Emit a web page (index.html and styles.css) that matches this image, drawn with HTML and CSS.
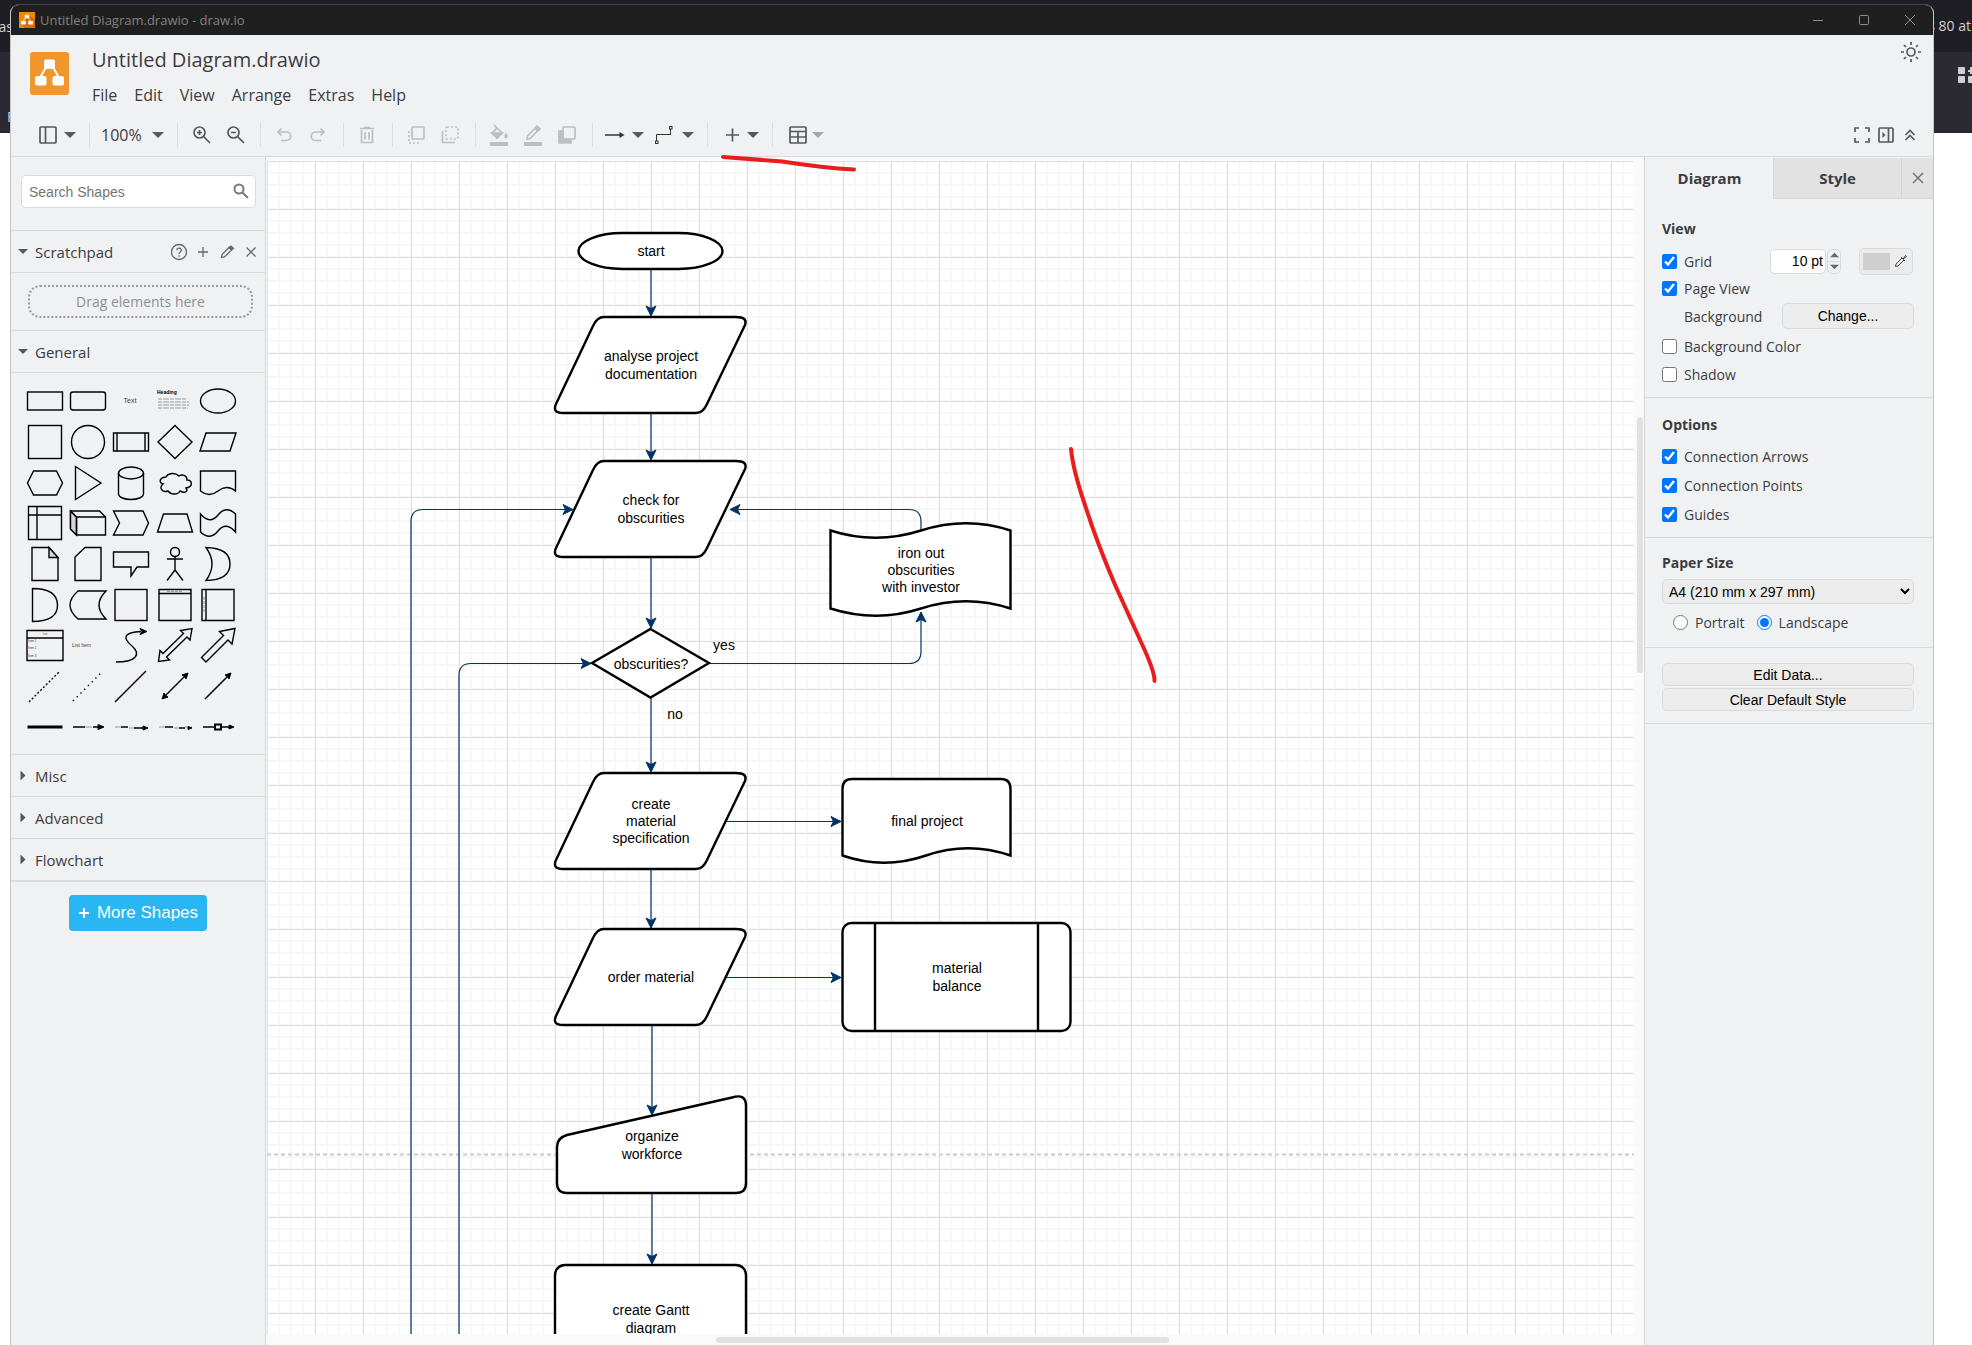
FILE: index.html
```html
<!DOCTYPE html>
<html lang="en">
<head>
<meta charset="utf-8">
<title>Untitled Diagram.drawio - draw.io</title>
<link rel="stylesheet" href="styles.css">
</head>
<body>
<svg class="defs" aria-hidden="true">
  <symbol id="caret" viewBox="0 0 12 8"><path d="M0 1h12L6 7z" fill="currentColor"/></symbol>
  <symbol id="logo" viewBox="0 0 39 43">
    <path d="M16 15 10 26M23 15 29 26" stroke="#fff" stroke-width="2"/>
    <rect x="14" y="7.500" width="11" height="9.500" rx="2" fill="#fff"/>
    <rect x="5" y="24" width="11.500" height="9.500" rx="2" fill="#fff"/>
    <rect x="22.500" y="24" width="11.500" height="9.500" rx="2" fill="#fff"/>
  </symbol>
</svg>

<div class="backdrop" aria-hidden="true">
  <span class="back-left">Pas</span>
  <span class="back-right">s 80 at</span>
  <svg class="back-icon" viewBox="0 0 14 18"><g fill="#d0d0d2"><rect x="0" y="1" width="7" height="7" rx="1"/><rect x="0" y="10" width="7" height="7" rx="1"/><rect x="10" y="10" width="7" height="7" rx="1"/><path d="M10 4h4v2h-4zM12 1h2v7h-2z"/></g></svg>
  <span class="back-tab">F</span>
</div>

<div class="window">
  <div class="titlebar">
    <svg class="titlebar-logo" viewBox="0 0 39 43" preserveAspectRatio="none"><path d="M0 0h39v43H0z" fill="#f08705"/><path d="M25 8 39 20V43H14L6 34z" fill="#df6c0c"/><use href="#logo"/></svg>
    <span>Untitled Diagram.drawio - draw.io</span>
    <div class="window-buttons">
      <button aria-label="Minimize"><svg viewBox="0 0 12 12"><path d="M1 6.500h10"/></svg></button>
      <button aria-label="Maximize"><svg viewBox="0 0 12 12"><rect x="1.500" y="1.500" width="9" height="9" rx="1"/></svg></button>
      <button aria-label="Close window"><svg viewBox="0 0 12 12"><path d="M1 1l10 10M11 1 1 11"/></svg></button>
    </div>
  </div>

  <header class="header">
    <div class="brand">
      <svg class="logo" viewBox="0 0 39 43"><rect width="39" height="43" rx="3" fill="#f0962d"/><use href="#logo"/></svg>
      <div class="brand-text">
        <h1>Untitled Diagram.drawio</h1>
        <nav class="menu">
          <a href="#file">File</a><a href="#edit">Edit</a><a href="#view">View</a><a href="#arrange">Arrange</a><a href="#extras">Extras</a><a href="#help">Help</a>
        </nav>
      </div>
      <button class="theme" aria-label="Appearance"><svg class="icon" viewBox="0 0 24 24"><circle cx="12" cy="12" r="4"/><path d="M12 2v3M12 19v3M2 12h3M19 12h3M5 5l2 2M17 17l2 2M5 19l2-2M17 7l2-2"/></svg></button>
    </div>
    <div class="toolbar">
      <div class="group"><button class="split" aria-label="View panels"><svg class="icon" viewBox="0 0 24 24"><rect x="4" y="4" width="16" height="16" rx="1"/><path d="M9.500 4v16"/></svg><svg class="caret"><use href="#caret"/></svg></button></div>
      <div class="group"><button class="split zoom">100%<svg class="caret"><use href="#caret"/></svg></button></div>
      <div class="group">
        <button aria-label="Zoom in"><svg class="icon" viewBox="0 0 24 24"><circle cx="10.500" cy="9.500" r="5.500"/><path d="M14.500 13.500 21 20M8 9.500h5M10.500 7v5"/></svg></button>
        <button aria-label="Zoom out"><svg class="icon" viewBox="0 0 24 24"><circle cx="10.500" cy="9.500" r="5.500"/><path d="M14.500 13.500 21 20M8 9.500h5"/></svg></button>
      </div>
      <div class="group off">
        <button aria-label="Undo" disabled><svg class="icon" viewBox="0 0 24 24"><path d="M9.500 5.500 6 9l3.500 3.500M6 9h8.500a4 4 0 0 1 0 8.500H9"/></svg></button>
        <button aria-label="Redo" disabled><svg class="icon" viewBox="0 0 24 24"><path d="M14.500 5.500 18 9l-3.500 3.500M18 9H9.500a4 4 0 0 0 0 8.500H15"/></svg></button>
      </div>
      <div class="group off"><button aria-label="Delete" disabled><svg class="icon" viewBox="0 0 24 24"><path d="M6.500 7v12.500h11V7M5 5.500h14M9 4.500h6M10 9v7.500M14 9v7.500"/></svg></button></div>
      <div class="group off">
        <button aria-label="To front" disabled><svg class="icon" viewBox="0 0 24 24"><rect x="8" y="4" width="12" height="12" rx="1"/><path d="M5 8v12h12" stroke-dasharray="2 2"/></svg></button>
        <button aria-label="To back" disabled><svg class="icon" viewBox="0 0 24 24"><rect x="8" y="4" width="12" height="12" rx="1" stroke-dasharray="2 2"/><path d="M4.500 8v11.500H17"/></svg></button>
      </div>
      <div class="group off">
        <button aria-label="Fill color" disabled><svg class="icon" viewBox="0 0 24 24"><path d="M7 2l8 8-5 5-5-5 5-5"/><path d="M5 10h10l-5 5z" fill="currentColor"/><path d="M19 11c3 4.500-3 4.500 0 0z" fill="currentColor"/><path d="M3 21h18" stroke-width="4"/></svg></button>
        <button aria-label="Line color" disabled><svg class="icon" viewBox="0 0 24 24"><path d="M6 16l.5-3L15 4.500 17.500 7 9 15.500z"/><path d="M14 5.500 16 3l3 3-2.500 2z" fill="currentColor"/><path d="M3 21h18" stroke-width="4"/></svg></button>
        <button aria-label="Shadow" disabled><svg class="icon" viewBox="0 0 24 24"><path d="M4 8h4v8.500h8V20H4z" fill="currentColor"/><rect x="8" y="4" width="12" height="12" rx="1"/></svg></button>
      </div>
      <div class="group">
        <button class="split" aria-label="Connection"><svg class="icon" viewBox="0 0 24 24"><path d="M1 12h16" stroke="#333" stroke-width="1.500"/><path d="M15.500 9l5 3-5 3z" fill="#333" stroke="none"/></svg><svg class="caret"><use href="#caret"/></svg></button>
        <button class="split" aria-label="Waypoints"><svg class="icon thin" viewBox="0 0 24 24"><path d="M2.500 18v-6.500h14V6"/><rect x="1.500" y="18" width="2.500" height="2.500"/><rect x="15.500" y="3.500" width="2.500" height="2.500"/></svg><svg class="caret"><use href="#caret"/></svg></button>
      </div>
      <div class="group"><button class="split" aria-label="Insert"><svg class="icon" viewBox="0 0 24 24"><path d="M7 12h13M13.500 5.500v13"/></svg><svg class="caret"><use href="#caret"/></svg></button></div>
      <div class="group"><button class="split pale" aria-label="Table"><svg class="icon" viewBox="0 0 24 24"><rect x="6" y="4" width="16" height="16" rx="1"/><path d="M6 8.500h16M6 14h16M14 8.500V20"/></svg><svg class="caret"><use href="#caret"/></svg></button></div>
      <div class="toolbar-end">
        <button aria-label="Fullscreen"><svg class="icon" viewBox="0 0 24 24"><path d="M5 9V5h4M15 5h4v4M19 15v4h-4M9 19H5v-4"/></svg></button>
        <button aria-label="Format panel"><svg class="icon" viewBox="0 0 24 24"><rect x="5" y="5" width="14" height="14" rx="1"/><path d="M14.500 5v14"/><path d="M8.500 9v6l3-3z" fill="currentColor" stroke="none"/></svg></button>
        <button aria-label="Collapse toolbar"><svg class="icon" viewBox="0 0 24 24"><path d="M7.500 12 12 7.500l4.500 4.500M7.500 17l4.500-4.500 4.500 4.500"/></svg></button>
      </div>
    </div>
  </header>

  <div class="workspace">
    <aside class="sidebar">
      <div class="search">
        <input type="text" placeholder="Search Shapes" aria-label="Search Shapes">
        <svg viewBox="0 0 16 16"><circle cx="6" cy="6" r="4.500"/><path d="M9.500 9.500 15 15"/></svg>
      </div>
      <div class="palette-title">
        <svg class="caret small"><use href="#caret"/></svg><h2>Scratchpad</h2>
        <div class="palette-tools">
          <button aria-label="Help"><svg viewBox="0 0 18 18"><circle cx="9" cy="9" r="7.500"/><path d="M6.800 7.200a2.200 2.200 0 1 1 3.300 2c-.8.5-1.100.8-1.100 1.800M9 12.300v1.500"/></svg></button>
          <button aria-label="Add"><svg viewBox="0 0 18 18"><path d="M4 9h10M9 4v10"/></svg></button>
          <button aria-label="Edit"><svg viewBox="0 0 18 18"><path d="M3.500 14.500l.5-3L11 4.500l2.500 2.500-7 7z"/><path d="M11 4.500 13 3l2.500 2.500-2 1.500z" fill="currentColor"/></svg></button>
          <button aria-label="Close"><svg viewBox="0 0 18 18"><path d="M4.500 4.500l9 9M13.500 4.500l-9 9"/></svg></button>
        </div>
      </div>
      <div class="scratch"><div class="drop">Drag elements here</div></div>
      <div class="palette-title"><svg class="caret small"><use href="#caret"/></svg><h2>General</h2></div>
      <div class="shapes">
        <svg viewBox="-20 -20 40 40"><rect x="-17.500" y="-9" width="35" height="18"/></svg>
        <svg viewBox="-20 -20 40 40"><rect x="-17.500" y="-9" width="35" height="18" rx="2.500"/></svg>
        <svg viewBox="-20 -20 40 40"><text class="t7" x="-1" y="2" text-anchor="middle">Text</text></svg>
        <svg viewBox="-20 -20 40 40"><text class="t5 strong" x="-18" y="-7">Heading</text><path class="faint" d="M-17-2H11M-17 1H14M-17 4H14M-17 7H13" stroke-dasharray="4 1 6 1"/></svg>
        <svg viewBox="-20 -20 40 40"><ellipse rx="17.500" ry="12"/></svg>

        <svg viewBox="-20 -20 40 40"><rect x="-16.500" y="-16.500" width="33" height="33"/></svg>
        <svg viewBox="-20 -20 40 40"><circle r="16.500"/></svg>
        <svg viewBox="-20 -20 40 40"><path d="M-17.500-9h35V9h-35zM-14-9V9M14-9V9"/></svg>
        <svg viewBox="-20 -20 40 40"><path d="M0-16.500 17 0 0 16.500-17 0z"/></svg>
        <svg viewBox="-20 -20 40 40"><path d="M-12-9h30L12 9h-30z"/></svg>

        <svg viewBox="-20 -20 40 40"><path d="M-11.500-12h23L17.500 0l-6 12h-23l-6-12z"/></svg>
        <svg viewBox="-20 -20 40 40"><path d="M-12.500-16.500 13 0l-25.500 16.500z"/></svg>
        <svg viewBox="-20 -20 40 40"><ellipse cy="-10" rx="12.500" ry="6"/><path d="M-12.500-10V10.500c0 8 25 8 25 0V-10"/></svg>
        <svg viewBox="-20 -20 40 40"><path d="M-9-6C-15-6-17 0-12 1c-5 4 0 9 5 7 3 4 10 4 12 0 6 3 8 0 6-3 7-1 7-8 1-8 0-5-5-6-8-4-4-4-11-3-13 1z"/></svg>
        <svg viewBox="-20 -20 40 40"><path d="M-17.500 8v-20h35V8Q9 1 0 8t-17.500 0z"/></svg>

        <svg viewBox="-20 -20 40 40"><path d="M-16.500-16.500h33v33h-33zM-16.500-8h33M-8-16.500v33"/></svg>
        <svg viewBox="-20 -20 40 40"><path d="M-17.500-12h29l6 6v18h-29l-6-6z"/><path class="shade" d="M-17.500-12l6 6v18l-6-6z"/><path d="M-17.500-12l6 6h29M-11.500-6v18"/></svg>
        <svg viewBox="-20 -20 40 40"><path d="M-17.500-12H12l5.500 12L12 12h-29.500l6-12z"/></svg>
        <svg viewBox="-20 -20 40 40"><path d="M-11.500-9H12l5.500 18h-35z"/></svg>
        <svg viewBox="-20 -20 40 40"><path d="M-17.500-9Q-8 2 0-8t17.500-1V9Q8-2 0 8T-17.500 9z"/></svg>

        <svg viewBox="-20 -20 40 40"><path d="M-13-16.500H4l9 10v23h-26z"/><path class="shade" d="M4-16.500v10h9z"/></svg>
        <svg viewBox="-20 -20 40 40"><path d="M-3-16.500h16v33h-26V-7z"/></svg>
        <svg viewBox="-20 -20 40 40"><path d="M-17.500-12h35V3H6l-6 9V3h-17.500z"/></svg>
        <svg viewBox="-20 -20 40 40"><circle cy="-12" r="4.500"/><path d="M0-7.500V6M-8-5H8M0 6l-8 10.500M0 6l8 10.500"/></svg>
        <svg viewBox="-20 -20 40 40"><path d="M-12-16.500Q12-16 12 0T-12 16.500Q0 0-12-16.500z"/></svg>

        <svg viewBox="-20 -20 40 40"><path d="M-12.500-16.500Q12.500-16.500 12.500 0T-12.500 16.500z"/></svg>
        <svg viewBox="-20 -20 40 40"><path d="M-10-14h28Q4 0 18 14h-28Q-26 0-10-14z"/></svg>
        <svg viewBox="-20 -20 40 40"><rect x="-16" y="-15.500" width="32" height="31"/></svg>
        <svg viewBox="-20 -20 40 40"><path d="M-16-15.500h32v31h-32zM-16-11.500h32"/><path class="faint" d="M-8-13.500H8" stroke-dasharray="3 1"/></svg>
        <svg viewBox="-20 -20 40 40"><path d="M-16-15.500h32v31h-32zM-12-15.500v31"/><path class="faint" d="M-14-8V8" stroke-dasharray="3 1"/></svg>

        <svg viewBox="-20 -20 40 40"><path d="M-18-14.500h36v30h-36zM-18-7h36"/><text class="t3" x="0" y="-10" text-anchor="middle">List</text><text class="t3" x="-17" y="-3">Item 1</text><text class="t3" x="-17" y="4">Item 2</text><text class="t3" x="-17" y="12">Item 3</text></svg>
        <svg viewBox="-20 -20 40 40"><text class="t5" x="-16" y="2">List Item</text></svg>
        <svg viewBox="-20 -20 40 40"><path d="M-15 17C6 17 10 9 1 1-9-7-7-13 10-13.500"/><path class="fill" d="M16-13.500l-7-3 2 3-2 3z"/></svg>
        <svg viewBox="-20 -20 40 40"><path d="M-16.500 16.500l1.500-11 3 3L8.500-11.500l-3-3 11.500-2-2 11.500-3-3L-8.500 12l3 3z"/></svg>
        <svg viewBox="-20 -20 40 40"><path d="M-12 17l-4.500-4.500L5.500-9.500l-4-4 15.500-3-3 15.500-4-4z"/></svg>

        <svg viewBox="-20 -20 40 40"><path d="M-16 16 15-15" stroke-dasharray="2 2"/></svg>
        <svg viewBox="-20 -20 40 40"><path d="M-15 15 15-15" stroke-dasharray="1.300 4"/></svg>
        <svg viewBox="-20 -20 40 40"><path d="M-16 16 15-15"/></svg>
        <svg viewBox="-20 -20 40 40"><path d="M-10 10l20-20"/><path class="fill" d="M-13 13l2-6 1.500 2.500L-7 11zM13-13l-2 6-1.500-2.500L7-11z"/></svg>
        <svg viewBox="-20 -20 40 40"><path d="M-13 13l23-23"/><path class="fill" d="M13-13l-2 6-1.500-2.500L7-11z"/></svg>

        <svg viewBox="-20 -20 40 40"><path d="M-17.500 0h35" stroke-width="3"/></svg>
        <svg viewBox="-20 -20 40 40"><path d="M-15 0h12M5 0h7"/><path class="faint" d="M-3 0h7"/><path class="fill" d="M16 0l-6-2.500v5z"/></svg>
        <svg viewBox="-20 -20 40 40"><path d="M-10 0h7M3 1h10"/><path class="faint" d="M-16 0h6M-2 1h5"/><path class="fill" d="M17 1l-5-2v4z"/></svg>
        <svg viewBox="-20 -20 40 40"><path d="M-10 0h8M4 1h6"/><path class="faint" d="M-16 0h6M-1 1h5M10 0h7"/><path class="fill" d="M17 1l-4-1.500v3z"/></svg>
        <svg viewBox="-20 -20 40 40"><path d="M-15 0h11M4 0h8"/><rect x="-3" y="-2.500" width="6" height="5" stroke-width="2"/><path class="fill" d="M16 0l-5-2v4z"/></svg>
      </div>
      <div class="palette-title closed"><svg class="caret small"><use href="#caret"/></svg><h2>Misc</h2></div>
      <div class="palette-title closed"><svg class="caret small"><use href="#caret"/></svg><h2>Advanced</h2></div>
      <div class="palette-title closed last"><svg class="caret small"><use href="#caret"/></svg><h2>Flowchart</h2></div>
      <button class="more"><svg viewBox="0 0 12 12"><path d="M6 1v10M1 6h10"/></svg>More Shapes</button>
    </aside>

    <main class="stage">
      <div class="canvas">
        <svg class="diagram">
          <defs>
            <marker id="head" viewBox="-11 -6 12 12" refX="0" refY="0" markerWidth="12" markerHeight="12" markerUnits="userSpaceOnUse" orient="auto"><path d="M0 0-10-5-7.500 0-10 5z" fill="#036" stroke="#036" stroke-width="1"/></marker>
            <path id="data" d="M604 317H736Q748 317 745 325L707 404Q703 413 696 413H563Q552 413 556 404L593 326Q597 317 604 317Z"/>
          </defs>
          <line class="page-break" x1="0" y1="993.500" x2="100%" y2="993.500"/>
          <g transform="translate(-267 -161)">
            <g class="node">
              <rect x="578.500" y="233" width="144" height="36" rx="44" ry="18"/>
              <use href="#data"/><use href="#data" y="144"/><use href="#data" y="456"/><use href="#data" y="612"/>
            </g>
            <g class="edge">
              <path d="M651 270V316"/><path d="M651 413V460"/><path d="M651 557V628"/><path d="M651 698V772"/><path d="M651 869V928"/>
              <path d="M411 2000V521.500Q411 509.500 423 509.500H573"/>
              <path d="M459 2000V675.500Q459 663.500 471 663.500H591"/>
              <path d="M710 663.500H909Q921 663.500 921 651.500V612"/>
              <path d="M921 530V521.500Q921 509.500 909 509.500H730"/>
              <path d="M727 821.500H841"/><path d="M727 977.500H841"/>
            </g>
            <g class="node">
              <path d="M650.500 629 709 663 650.500 697.500 592 663z"/>
              <path d="M830.500 530.500Q875.500 545 921 530.500T1010.500 530.500V608.500Q966 594 921 608.500T830.500 608.500Z"/>
              <path d="M842.500 855.500V789Q842.500 779 852 779H1001Q1010.500 779 1010.500 789V855.500Q968 841 926 855.500T842.500 855.500Z"/>
              <rect x="842.500" y="923" width="228" height="108" rx="9"/><path d="M875 923V1031M1038 923V1031"/>
              <path d="M567 1135 732 1097.500Q746 1093 746 1106V1183Q746 1193 736 1193H567Q557 1193 557 1183V1147Q557 1138 567 1135Z"/>
              <rect x="555" y="1265" width="191" height="108" rx="10"/>
            </g>
            <g class="edge"><path d="M652 1025V1115"/><path d="M652 1193V1264"/></g>
            <g class="label">
              <text x="651" y="256">start</text>
              <text x="651" y="361">analyse project</text><text x="651" y="379">documentation</text>
              <text x="651" y="505">check for</text><text x="651" y="523">obscurities</text>
              <text x="921" y="558">iron out</text><text x="921" y="575">obscurities</text><text x="921" y="592">with investor</text>
              <text x="651" y="669">obscurities?</text><text x="724" y="650">yes</text><text x="675" y="719">no</text>
              <text x="651" y="809">create</text><text x="651" y="826">material</text><text x="651" y="843">specification</text>
              <text x="927" y="826">final project</text>
              <text x="651" y="982">order material</text>
              <text x="957" y="973">material</text><text x="957" y="991">balance</text>
              <text x="652" y="1141">organize</text><text x="652" y="1159">workforce</text>
              <text x="651" y="1315">create Gantt</text><text x="651" y="1333">diagram</text>
            </g>
          </g>
        </svg>
      </div>
      <div class="scroll vertical"><span></span></div>
      <div class="scroll horizontal"><span></span></div>
    </main>

    <aside class="format">
      <div class="tabs"><button class="tab active">Diagram</button><button class="tab">Style</button><button class="tab-close" aria-label="Close panel"><svg viewBox="0 0 12 12"><path d="M1 1l10 10M11 1 1 11"/></svg></button></div>
      <section class="view">
        <h3>View</h3>
        <div class="row tall">
          <label><input type="checkbox" checked>Grid</label>
          <span class="stepper"><input type="text" value="10 pt" aria-label="Grid size"><span class="steps"><button aria-label="Increase"><svg class="flip"><use href="#caret"/></svg></button><button aria-label="Decrease"><svg><use href="#caret"/></svg></button></span></span>
          <button class="color" aria-label="Grid color"><span></span><svg viewBox="0 0 14 14"><path d="M1.500 12.500 2 10l6-6 2 2-6 6zM7 3l4 4M9 5l2.500-3.500 1 1L9 5"/></svg></button>
        </div>
        <div class="row"><label><input type="checkbox" checked>Page View</label></div>
        <div class="row bg"><span>Background</span><button class="btn">Change...</button></div>
        <div class="row bgc"><label><input type="checkbox">Background Color</label></div>
        <div class="row"><label><input type="checkbox">Shadow</label></div>
      </section>
      <section class="options">
        <h3>Options</h3>
        <div class="row"><label><input type="checkbox" checked>Connection Arrows</label></div>
        <div class="row"><label><input type="checkbox" checked>Connection Points</label></div>
        <div class="row"><label><input type="checkbox" checked>Guides</label></div>
      </section>
      <section class="paper">
        <h3>Paper Size</h3>
        <select aria-label="Paper Size"><option>A4 (210 mm x 297 mm)</option></select>
        <div class="row radios"><label><input type="radio" name="orientation">Portrait</label><label><input type="radio" name="orientation" checked>Landscape</label></div>
      </section>
      <section class="actions"><button class="btn">Edit Data...</button><button class="btn">Clear Default Style</button></section>
    </aside>
  </div>

  <svg class="ink" aria-hidden="true">
    <path d="M712 152 771 156.500Q813 163 843 164.500"/>
    <path d="M1060 444Q1062 465 1074 500 1086 538 1105 582L1130 637Q1144 667 1143.500 676"/>
  </svg>
</div>
</body>
</html>
```
FILE: styles.css
```css
* { box-sizing: border-box; }
body {
  margin: 0;
  min-height: 100vh;
  background: #fff;
  color: #3c3c3f;
  font-family: "Open Sans", "Noto Sans", sans-serif;
  font-size: 14px;
}
button { margin: 0; padding: 0; border: 0; background: none; color: inherit; font: inherit; }
svg { display: block; }
.defs { position: absolute; width: 0; height: 0; }

/* Browser strip behind the window */
.backdrop {
  position: absolute;
  top: 0;
  left: 0;
  right: 0;
  height: 133px;
  overflow: hidden;
  background: linear-gradient(#1f1e25 52px, #2b2a33 52px);
  color: #cfcfd2;
}
.backdrop span { position: absolute; }
.back-left { left: -10px; top: 17px; }
.back-right { right: 1px; top: 16px; }
.back-icon { position: absolute; right: 0; top: 66px; width: 14px; height: 18px; }
.back-tab { left: 7px; top: 107px; }

.window {
  position: relative;
  display: flex;
  flex-direction: column;
  height: calc(100vh - 4px);
  min-height: 960px;
  margin: 0 38px 0 10px;
  top: 4px;
  border: 1px solid #c4c6c9;
  border-width: 1px 1px 0;
  border-top-color: #47474b;
  border-radius: 9px 9px 0 0;
  overflow: hidden;
  background: #f0f1f3;
}
.titlebar {
  display: flex;
  align-items: center;
  gap: 5px;
  height: 30px;
  padding-left: 8px;
  background: #1f1f1f;
  color: #828282;
  font-size: 13px;
}
.titlebar-logo { width: 16px; height: 16px; }
.window-buttons { display: flex; margin-left: auto; }
.window-buttons button { display: grid; place-items: center; width: 46px; height: 30px; }
.window-buttons svg { width: 12px; height: 12px; fill: none; stroke: #8e8e8e; }

.header { height: 122px; border-bottom: 1px solid #d8dadc; }
.brand { display: flex; align-items: flex-start; height: 78px; }
.logo { width: 39px; height: 43px; margin: 17px 0 0 19px; }
.brand-text { margin-left: 23px; }
h1 { margin: 10px 0 0; font-size: 20px; font-weight: 400; line-height: 30px; }
.menu { display: flex; gap: 17px; margin-top: 8px; }
.menu a { color: inherit; text-decoration: none; font-size: 16px; line-height: 24px; }
.theme { margin: 5px 10px 0 auto; color: #55585c; }
.toolbar { display: flex; align-items: center; height: 44px; padding: 0 11px 0 25px; color: #55585c; }
.group { display: flex; gap: 10px; }
.group + .group::before { content: ""; width: 1px; height: 24px; margin: 0 1px 0 13px; background: #dcdde0; }
.group.off { color: #bcbec1; }
.icon { width: 24px; height: 24px; fill: none; stroke: currentColor; stroke-width: 1.700; }
.icon.thin { stroke-width: 1; stroke: #333; }
.split { display: flex; align-items: center; gap: 4px; }
.split.zoom { gap: 10px; color: #3c3c3f; font-size: 16px; line-height: 24px; }
.caret { width: 12px; height: 8px; color: #55585c; }
.pale .caret { color: #a3a5a8; }
.toolbar-end { display: flex; margin-left: auto; }

.workspace { display: flex; flex: 1; min-height: 0; }

/* Shape library */
.sidebar { flex: none; width: 255px; border-right: 1px solid #d3d5d7; overflow: hidden; }
.search { position: relative; padding: 18px 9px 22px 10px; border-bottom: 1px solid #d8dadc; }
.search input {
  display: block;
  width: 100%;
  height: 33px;
  padding: 0 30px 0 7px;
  border: 1px solid #d8dadc;
  border-radius: 5px;
  background: #fff;
  font: 14px "Liberation Sans", Arial, sans-serif;
}
.search input::placeholder { color: #757575; }
.search svg { position: absolute; right: 16px; top: 26px; width: 16px; height: 16px; fill: none; stroke: #77797c; stroke-width: 2; }
.palette-title { display: flex; align-items: center; height: 42px; padding: 0 5px 0 7px; border-bottom: 1px solid #d8dadc; }
.palette-title.last { height: 43px; border-bottom-width: 2px; }
.caret.small { width: 10px; height: 7px; }
.closed .caret { transform: rotate(-90deg); }
h2 { margin: 0 0 0 7px; font-size: 15px; font-weight: 500; line-height: 24px; }
.palette-tools { display: flex; gap: 6px; margin-left: auto; color: #66696c; }
.palette-tools svg { width: 18px; height: 18px; fill: none; stroke: currentColor; stroke-width: 1.300; }
.scratch { padding: 12px 12px 12px 17px; border-bottom: 1px solid #d8dadc; }
.drop { height: 33px; border: 2px dotted #9a9c9f; border-radius: 12px; color: #8e9093; line-height: 29px; text-align: center; }
.shapes { display: grid; grid-template-columns: repeat(5, 1fr); grid-template-rows: repeat(9, 1fr); place-items: center; height: 382px; padding: 8px 25px 7px 12px; border-bottom: 1px solid #d8dadc; }
.shapes svg { width: 40px; height: 40px; overflow: visible; fill: none; stroke: #000; stroke-width: 1.400; }
.shapes text { fill: #444; stroke: none; font-family: "Liberation Sans", Arial, sans-serif; }
.shapes .t7 { font-size: 7px; }
.shapes .t5 { font-size: 5px; }
.shapes .t3 { font-size: 3px; }
.shapes .strong { fill: #000; font-weight: 700; }
.shapes .faint { stroke: #999; stroke-width: 1; }
.shapes .shade { fill: #d5d6d8; }
.shapes .fill { fill: #000; stroke-width: 1; }
.more {
  display: flex;
  align-items: center;
  justify-content: center;
  gap: 7px;
  width: 138px;
  height: 36px;
  margin: 13px auto 0 58px;
  border-radius: 4px;
  background: #29b6f2;
  color: #fff;
  font: 17px "Liberation Sans", Arial, sans-serif;
}
.more svg { width: 12px; height: 12px; stroke: #fff; stroke-width: 2; }

/* Drawing area */
.stage { display: grid; grid-template: 1fr 11px / 1fr 10px; flex: 1; min-width: 0; padding: 4px 0 0 1px; background: #fafafa; }
.canvas {
  overflow: hidden;
  background:
    linear-gradient(90deg, #dfdfdf 1px, transparent 1px) 0 0 / 48px 48px,
    linear-gradient(#dfdfdf 1px, transparent 1px) 0 0 / 48px 48px,
    linear-gradient(90deg, #f7f7f7 2px, transparent 2px) -1px 0 / 12px 12px,
    linear-gradient(#f7f7f7 2px, transparent 2px) 0 -1px / 12px 12px,
    #fff;
}
.diagram { width: 100%; height: 100%; }
.page-break { stroke: #ccc; stroke-width: 2; stroke-dasharray: 4 3; }
.node { fill: #fff; stroke: #000; stroke-width: 2.400; }
.edge { fill: none; stroke: #036; stroke-width: 1.200; }
.edge path { marker-end: url(#head); }
.label { fill: #000; font: 14px "Liberation Sans", Arial, sans-serif; text-anchor: middle; }
.scroll { display: flex; }
.scroll span { border-radius: 4px; background: #e1e1e1; }
.scroll::before, .scroll::after { content: ""; }
.vertical { flex-direction: column; padding: 0 1px 0 3px; }
.vertical::before { flex: 256; }
.vertical span { flex: 256; }
.vertical::after { flex: 661; }
.horizontal { padding: 3px 0 2px; }
.horizontal::before { flex: 449; }
.horizontal span { flex: 453; }
.horizontal::after { flex: 465; }

/* Format panel */
.format { flex: none; width: 289px; border-left: 1px solid #d3d5d7; }
.tabs { display: flex; height: 42px; padding-top: 1px; }
.tab { flex: 1; border: solid #d3d5d7; border-width: 0 0 1px 1px; background: #e2e2e2; font-size: 15px; font-weight: 700; }
.tab.active { border-color: transparent; background: none; }
.tab-close { display: grid; place-items: center; width: 32px; border: solid #d3d5d7; border-width: 0 0 1px 1px; background: #e2e2e2; }
.tab-close svg { width: 12px; height: 12px; stroke: #6b6d70; stroke-width: 1.400; }
section { padding: 0 19px 0 17px; border-bottom: 1px solid #d8dadc; }
h3 { margin: 0; font-size: 14px; font-weight: 700; line-height: 24px; }
.row { display: flex; align-items: center; height: 26px; }
label { display: flex; align-items: center; gap: 7px; }
label input { width: 15px; height: 15px; margin: 0; accent-color: #0075ff; }
.view { padding-top: 18px; padding-bottom: 10px; }
.row.tall { height: 28px; margin-top: 6px; }
.row.bg { justify-content: space-between; height: 30px; padding-left: 22px; }
.row.bg .btn { width: 132px; height: 26px; }
.row.bgc { height: 30px; }
.btn, .color, select, .stepper input, .steps {
  border: 1px solid #d8dadc;
  border-radius: 5px;
  background: #ececec;
  color: #000;
  font: 14px "Liberation Sans", Arial, sans-serif;
}
.stepper { display: flex; gap: 1px; margin-left: auto; }
.stepper input { width: 56px; height: 25px; padding: 0 2px; background: #fff; text-align: right; }
.steps { display: flex; flex-direction: column; width: 14px; background: #f0f1f3; }
.steps button { display: grid; flex: 1; place-items: center; color: #66696c; }
.steps button + button { border-top: 1px solid #d8dadc; }
.steps svg { width: 9px; height: 6px; }
.flip { transform: rotate(180deg); }
.color { display: flex; align-items: center; gap: 4px; width: 54px; height: 27px; margin: 0 1px 0 18px; padding: 0 3px; }
.color span { width: 27px; height: 17px; background: #cfcfcf; }
.color svg { width: 14px; height: 14px; fill: none; stroke: #444; }
.options { padding-top: 15px; padding-bottom: 8px; }
.options h3 { margin-bottom: 5px; }
.options .row { height: 29px; }
.paper { padding-top: 13px; padding-bottom: 6px; }
select { display: block; width: 100%; height: 25px; margin-top: 4px; padding: 0 2px; }
.radios { gap: 12px; height: 37px; padding-left: 11px; }
.actions { display: flex; flex-direction: column; gap: 2px; padding-top: 15px; padding-bottom: 12px; }
.actions .btn { height: 23px; }

/* Freehand marker strokes over the window */
.ink { position: absolute; inset: 0; width: 100%; height: 100%; fill: none; stroke: #e81e1e; stroke-width: 4; stroke-linecap: round; pointer-events: none; }
```
